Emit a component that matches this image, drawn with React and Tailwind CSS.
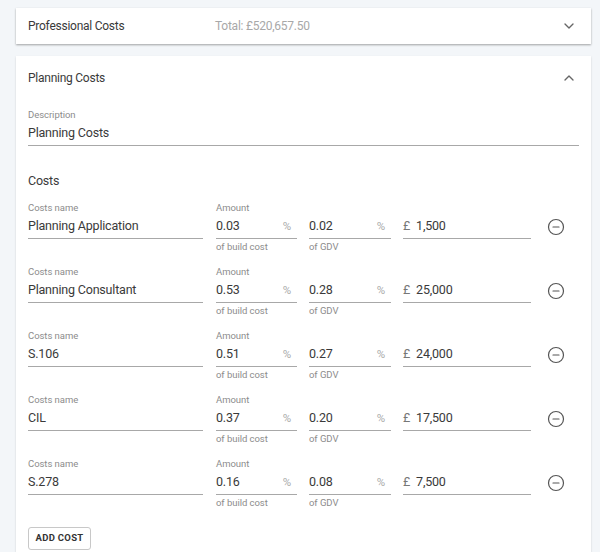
import React from "react";
import { ChevronDown, ChevronUp, CircleMinus } from "lucide-react";

const rows = [
  { name: "Planning Application", a: "0.03", g: "0.02", v: "1,500" },
  { name: "Planning Consultant", a: "0.53", g: "0.28", v: "25,000" },
  { name: "S.106", a: "0.51", g: "0.27", v: "24,000" },
  { name: "CIL", a: "0.37", g: "0.20", v: "17,500" },
  { name: "S.278", a: "0.16", g: "0.08", v: "7,500" },
];

const label = "h-[14px] text-[9.5px] leading-[14px] text-[#8c8c8c] tracking-[-0.05px]";
const input = "h-[24px] flex items-center border-b border-[#a8a8a8] text-[12.5px] tracking-[-0.2px] text-[#3a3a3a]";

function Row({ r }) {
  return (
    <div className="flex h-[64px]">
      <div className="w-[175px] flex flex-col">
        <div className={label}>Costs name</div>
        <div className={input}>{r.name}</div>
      </div>
      <div className="w-[81px] ml-[13px] flex flex-col">
        <div className={label}>Amount</div>
        <div className={input + " justify-between"}>
          <span>{r.a}</span>
          <span className="text-[#aaa] text-[11.5px] pr-[6px]">%</span>
        </div>
        <div className={label + " mt-[1px]"}>of build cost</div>
      </div>
      <div className="w-[82px] ml-[12px] flex flex-col">
        <div className="h-[14px]" />
        <div className={input + " justify-between"}>
          <span>{r.g}</span>
          <span className="text-[#aaa] text-[11.5px] pr-[6px]">%</span>
        </div>
        <div className={label + " mt-[1px]"}>of GDV</div>
      </div>
      <div className="w-[128px] ml-[12px] flex flex-col">
        <div className="h-[14px]" />
        <div className={input}>
          <span className="text-[#777] mr-[6px]">£</span>
          <span>{r.v}</span>
        </div>
      </div>
      <div className="ml-[16px] h-[38px] pt-[14px] flex items-center">
        <CircleMinus size={18} strokeWidth={1.6} className="text-[#555]" />
      </div>
    </div>
  );
}

export default function App() {
  return (
    <div
      className="w-[600px] h-[552px] overflow-hidden bg-[#f3f6f9] pt-[8px] pl-[16px] pr-[9px]"
      style={{ fontFamily: "Roboto, 'Liberation Sans', sans-serif" }}
    >
      <div className="bg-white h-[36px] flex items-center pl-[12px] pr-[14px] shadow-[0_1px_2px_rgba(0,0,0,0.35)]">
        <div className="w-[187px] text-[12px] tracking-[-0.25px] text-[#3a3a3a]">Professional Costs</div>
        <div className="flex-1 text-[12px] tracking-[-0.25px] text-[#a8a8a8]">Total: £520,657.50</div>
        <ChevronDown size={16} strokeWidth={2} className="text-[#666]" />
      </div>
      <div className="bg-white mt-[12px] h-[600px] shadow-[0_1px_2px_rgba(0,0,0,0.15)]">
        <div className="h-[44px] flex items-center pl-[12px] pr-[14px]">
          <div className="flex-1 text-[12px] tracking-[-0.25px] text-[#3a3a3a]">Planning Costs</div>
          <ChevronUp size={16} strokeWidth={2} className="text-[#666]" />
        </div>
        <div className="pl-[12px] pr-[12px]">
          <div className={label + " mt-[8px]"}>Description</div>
          <div className={input}>Planning Costs</div>
          <div className="mt-[25px] h-[20px] flex items-center text-[12.5px] tracking-[-0.2px] text-[#3a3a3a]">Costs</div>
          <div className="mt-[10px]">
            {rows.map((r) => (
              <Row key={r.name} r={r} />
            ))}
          </div>
          <div className="mt-[3px]">
            <button className="h-[23px] w-[63px] border border-[#c8c8c8] rounded-[3px] text-[9.5px] font-bold tracking-[0.3px] text-[#333] bg-white">
              ADD COST
            </button>
          </div>
        </div>
      </div>
    </div>
  );
}
